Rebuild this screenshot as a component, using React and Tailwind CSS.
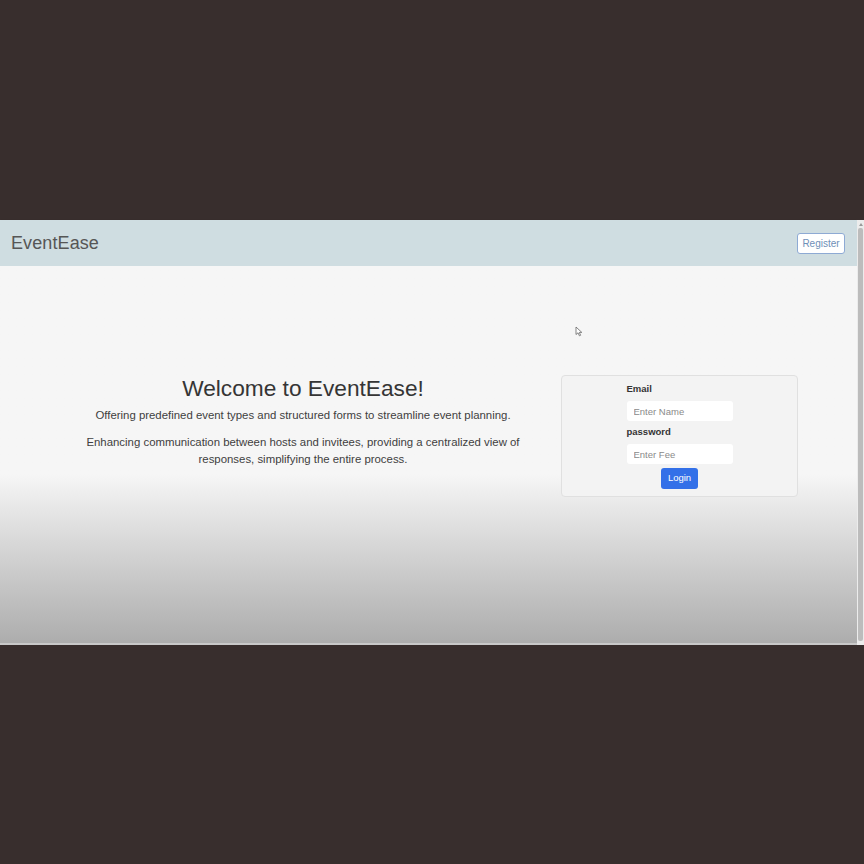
import React from 'react';

// Login landing page shown inside a dark video-style frame
function Navbar() {
    return (
        <div className="h-[46px] bg-[#cfdde1] flex items-center justify-between pl-[11px] pr-[12px] shadow-[0_1px_2px_rgba(0,0,0,0.06)]">
            <span className="text-[18px] text-[#565656] tracking-[0.1px]">EventEase</span>
            <button className="h-[21px] w-[48px] bg-white border border-[#8eaad4] rounded-[3px] text-[10px] text-[#6f8fb8] flex items-center justify-center">
                Register
            </button>
        </div>
    );
}

function LoginCard() {
    return (
        <div className="w-[237px] h-[122px] bg-[#f3f3f3] border border-[#e0e0e0] rounded-[4px] flex justify-center pt-[7px]">
            <div className="w-[106px] flex flex-col">
                <label className="text-[9.5px] font-bold text-[#333] leading-[12px]">Email</label>
                <input
                    placeholder="Enter Name"
                    className="mt-[6px] h-[20px] w-[106px] bg-white rounded-[3px] px-[7px] text-[9.5px] placeholder:text-[#8a8a8a] outline-none"
                />
                <label className="mt-[5px] text-[9.5px] font-bold text-[#333] leading-[12px]">password</label>
                <input
                    placeholder="Enter Fee"
                    className="mt-[6px] h-[20px] w-[106px] bg-white rounded-[3px] px-[7px] text-[9.5px] placeholder:text-[#8a8a8a] outline-none"
                />
                <button className="mt-[4px] mx-auto h-[21px] w-[37px] bg-[#3370e8] rounded-[3px] text-[9.5px] text-white flex items-center justify-center">
                    Login
                </button>
            </div>
        </div>
    );
}

function Scrollbar() {
    return (
        <div className="w-[7px] bg-[#ececec] flex flex-col">
            <div className="h-[8px] flex items-start justify-center pt-[3px]">
                <div className="w-0 h-0 border-l-[2px] border-r-[2px] border-b-[3px] border-l-transparent border-r-transparent border-b-[#9a9a9a]" />
            </div>
            <div className="flex-1 mx-[1px] mb-[4px] bg-[#bcbcbc] rounded-[2px]" />
        </div>
    );
}

export default function App() {
    return (
        <div className="w-[864px] h-[864px] bg-[#382e2d] flex flex-col pt-[220px]" style={{ fontFamily: '"Liberation Sans", Arial, sans-serif' }}>
            <div className="h-[425px] flex">
                <div className="flex-1 flex flex-col">
                    <Navbar />

                    {/* Body */}
                    <div className="relative flex-1 bg-linear-to-b from-[#f6f6f6] from-55% to-[#acacac] flex items-start pt-[109px]">
                        <div className="ml-[46px] w-[514px] text-center text-[#404040]">
                            <h1 className="text-[22.7px] leading-[26px] text-[#353535]">Welcome to EventEase!</h1>
                            <p className="mt-[6px] text-[11.4px] leading-[17px]">
                                Offering predefined event types and structured forms to streamline event planning.
                            </p>
                            <p className="mt-[10px] mx-auto w-[460px] text-[11.4px] leading-[17px]">
                                Enhancing communication between hosts and invitees, providing a centralized view of
                                responses, simplifying the entire process.
                            </p>
                        </div>
                        <div className="ml-[1px]">
                            <LoginCard />
                        </div>

                        {/* mouse cursor */}
                        <svg className="absolute left-[575px] top-[60px]" width="8" height="11" viewBox="0 0 8 11">
                            <path d="M1 1 L1 8.5 L3 6.8 L4.4 9.8 L5.6 9.3 L4.3 6.4 L6.8 6.4 Z" fill="#fff" stroke="#666" strokeWidth="0.8" />
                        </svg>

                        <div className="absolute bottom-0 left-0 right-0 h-[2px] bg-[#c9c9c9]" />
                    </div>
                </div>
                <Scrollbar />
            </div>
        </div>
    );
}
